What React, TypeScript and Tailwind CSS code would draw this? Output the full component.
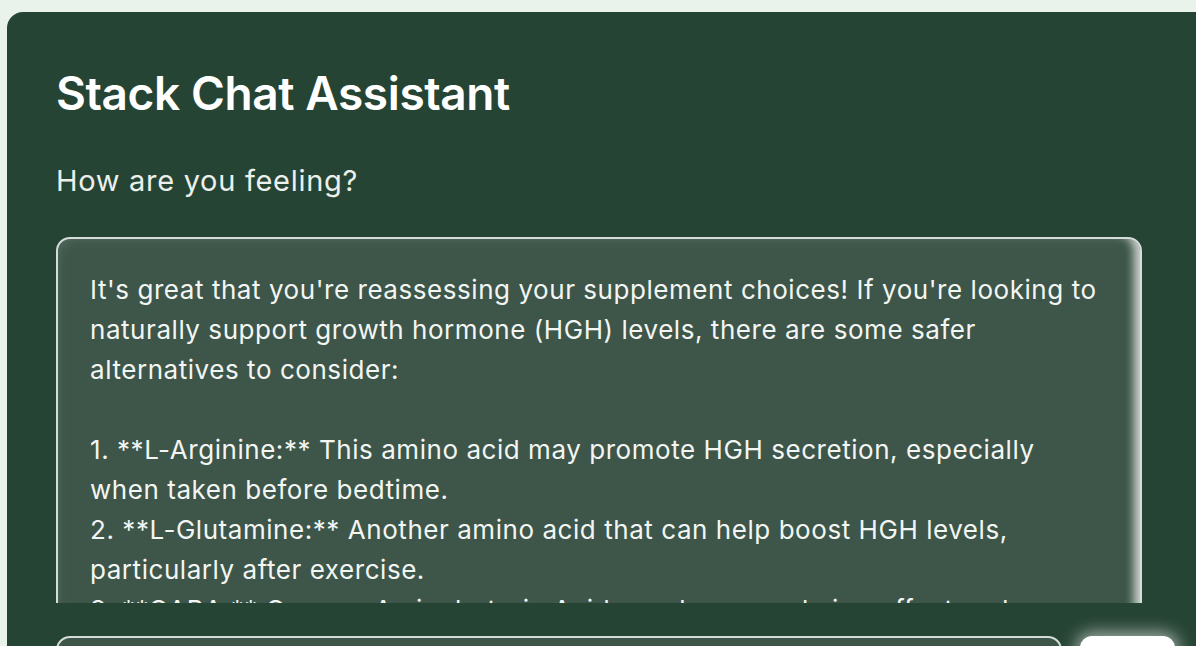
import React from "react";

export default function App() {
  const font = { fontFamily: "Inter, 'Noto Sans', sans-serif" };
  return (
    <div className="h-[646px] w-full overflow-hidden bg-[#e9f3eb] pt-[12px] pl-[7px]" style={font}>
      <div className="w-[1240px] h-[700px] rounded-tl-[16px] bg-[#264434] pl-[49px] pt-[53px]">
        <h1 className="text-[46px] leading-[56px] font-semibold text-white tracking-[-0.4px]">Stack Chat Assistant</h1>
        <p className="mt-[42px] text-[29px] leading-[36px] text-[#ecf0ed] tracking-[0.7px]">How are you feeling?</p>
        <div className="mt-[38px] w-[1086px] h-[366px] overflow-hidden">
          <div className="h-[420px] rounded-[14px] border-2 border-[#d6dcd8] bg-[#3d5649] pl-[32px] pr-[40px] pt-[31px] shadow-[inset_-14px_0_10px_-8px_rgba(255,255,255,0.75),inset_6px_6px_12px_-6px_rgba(255,255,255,0.12)]">
            <div className="text-[26px] leading-[40px] tracking-[0.55px] text-[#f3f5f3] whitespace-pre-line">
              {`It's great that you're reassessing your supplement choices! If you're looking to naturally support growth hormone (HGH) levels, there are some safer alternatives to consider:

1. **L-Arginine:** This amino acid may promote HGH secretion, especially when taken before bedtime.
2. **L-Glutamine:** Another amino acid that can help boost HGH levels, particularly after exercise.
3. **GABA:** Gamma-Aminobutyric Acid may have a calming effect and can support HGH release.`}
            </div>
          </div>
        </div>
        <div className="mt-[33px] flex items-start gap-[18px]">
          <div className="w-[1006px] h-[56px] rounded-[14px] border-2 border-[#d6dcd8] bg-[#3d5649]"></div>
          <div className="w-[95px] h-[50px] rounded-[12px] bg-white shadow-[0_0_16px_4px_rgba(255,255,255,0.55)]"></div>
        </div>
      </div>
    </div>
  );
}
